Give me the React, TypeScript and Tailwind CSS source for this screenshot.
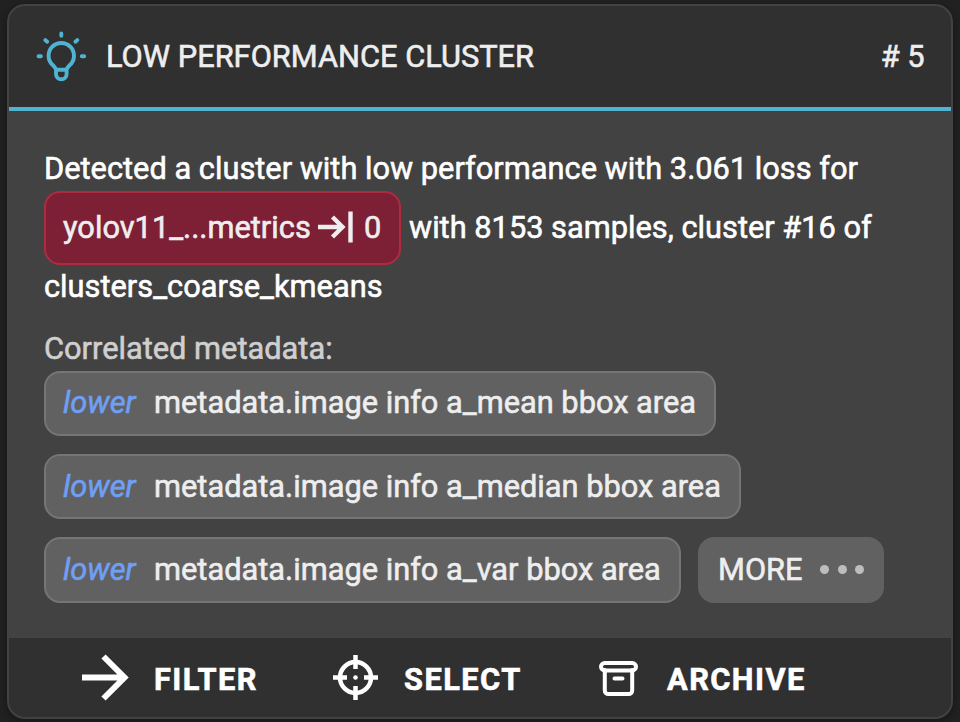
import React from "react";

const font = "font-['Roboto','Liberation_Sans',sans-serif]";

function Bulb() {
  return (
    <svg className="ml-[27px] h-[51px] w-[51px] shrink-0" viewBox="0 0 51 51" fill="none" stroke="#4fb3d1" strokeWidth="3.900" strokeLinecap="round" strokeLinejoin="round">
      <path d="M25.300 2.500v2.300M9.300 9.100l1.900 1.700M41.300 9.100l-1.900 1.700M2.500 25.300h2.400M45.800 25.300h2.400" />
      <path d="M20 38.700C19.500 36.500 18 35.500 17 34.300A12.700 12.700 0 1 1 33.600 34.300C32.600 35.500 31.100 36.500 30.600 38.700V43a5.300 5.300 0 0 1-10.600 0ZH30.600" />
    </svg>
  );
}

/* Slightly condensed run of text, anchored at its left edge. */
function T({ children, className = "" }: { children: React.ReactNode; className?: string }) {
  return <span className={`inline-block shrink-0 origin-left scale-x-[0.962] ${className}`}>{children}</span>;
}

function Chip({ name, size }: { name: string; size: string }) {
  return (
    <div className={`flex shrink-0 items-center overflow-hidden whitespace-pre rounded-2xl border-2 border-[#757575] bg-[#616161] pl-[17px] text-[#eeeeee] ${size}`}>
      <span className="w-[91px] shrink-0 italic text-[#6f9ff5]">
        <T>lower</T>
      </span>
      <T>{name}</T>
    </div>
  );
}

export default function App() {
  return (
    <div className={`h-[722px] w-[960px] bg-[#212121] pl-[7px] pt-1 text-[32px] leading-10 [-webkit-text-stroke:0.6px_currentColor] ${font}`}>
      <div className="flex h-[715px] w-[946px] flex-col overflow-hidden rounded-[18px] border-2 border-[#424242] bg-[#424242] shadow-[0_2px_8px_rgba(0,0,0,0.35)]">
        <header className="flex h-[105px] shrink-0 items-center border-b-4 border-[#4fb3d1] bg-[#303030] pb-px text-[#eeeeee]">
          <Bulb />
          <h1 className="ml-[19px] whitespace-pre">
            <T>LOW PERFORMANCE CLUSTER</T>
          </h1>
          <span className="ml-auto mr-[26px] inline-block origin-right scale-x-[0.962]"># 5</span>
        </header>
        <main className="h-[527px] shrink-0 whitespace-pre pl-[35px] pt-[37px] text-white">
          <p className="flex">
            <T>Detected a cluster with low performance with 3.061 loss for</T>
          </p>
          <div className="mt-[3px] flex h-[74px] items-center">
            <span className="mr-2 flex h-[74px] w-[357px] shrink-0 items-center rounded-2xl border-2 border-[#b02b40] bg-[#7d2036] pb-0.5 pl-[17px] text-[#eeeeee]">
              <span className="w-[255px] shrink-0">
                <T>yolov11_...metrics</T>
              </span>
              <svg className="h-8 w-[38px] shrink-0" viewBox="0 0 38 32" fill="none" stroke="#eeeeee" strokeWidth="4.400">
                <path d="M0 16h24M14.500 6L24.500 16 14.500 26M32.500 0.500v31" />
              </svg>
              <T className="ml-2">0</T>
            </span>
            <T className="pb-0.5">with 8153 samples, cluster #16 of</T>
          </div>
          <p className="mt-px flex">
            <T>clusters_coarse_kmeans</T>
          </p>
          <p className="mt-[22px] flex text-[#cfcfcf]">
            <T>Correlated metadata:</T>
          </p>
          <div className="mt-[3px] flex flex-col gap-[18px]">
            <Chip name="metadata.image info a_mean bbox area" size="h-[65px] w-[672px] pb-[3px]" />
            <Chip name="metadata.image info a_median bbox area" size="h-[65px] w-[697px] pb-px" />
            <div className="flex gap-[17px]">
              <Chip name="metadata.image info a_var bbox area" size="h-[66px] w-[637px] pb-0.5" />
              <button className="flex h-[66px] w-[186px] items-center rounded-2xl bg-[#616161] pb-0.5 pl-5 text-[#eeeeee]">
                <span className="w-[102px] text-left">
                  <T>MORE</T>
                </span>
                <span className="flex gap-[8.5px] pt-px">
                  <i className="size-[9px] rounded-full bg-[#bdbdbd]" />
                  <i className="size-[9px] rounded-full bg-[#bdbdbd]" />
                  <i className="size-[9px] rounded-full bg-[#bdbdbd]" />
                </span>
              </button>
            </div>
          </div>
        </main>
        <footer className="flex h-[79px] shrink-0 items-center bg-[#303030] font-bold tracking-[1.5px] text-white">
          <button className="ml-[73px] flex w-[251px] items-center">
            <svg className="h-[47px] w-[47px]" viewBox="0 0 47 47" fill="none" stroke="currentColor" strokeWidth="6">
              <path d="M0 23.500h42M21.500 2.500l21 21-21 21" />
            </svg>
            <T className="ml-[25px] pt-0.5">FILTER</T>
          </button>
          <button className="flex w-[266px] items-center">
            <svg className="h-[45px] w-[45px]" viewBox="0 0 45 45" fill="none" stroke="currentColor" strokeWidth="4.500">
              <circle cx="22.500" cy="22.500" r="15.500" />
              <path d="M22.500 0v14M22.500 31v14M0 22.500h14M31 22.500h14" />
              <circle cx="22.500" cy="22.500" r="2.300" fill="currentColor" stroke="none" />
            </svg>
            <T className="ml-[26px] pt-0.5">SELECT</T>
          </button>
          <button className="flex items-center">
            <svg className="h-9 w-[39px]" viewBox="0 0 39 36" fill="none" stroke="currentColor" strokeWidth="4">
              <rect x="2" y="3" width="35" height="7.500" rx="3.750" />
              <path d="M5.800 10v20.500a3.500 3.500 0 0 0 3.500 3.500h20.400a3.500 3.500 0 0 0 3.500-3.500V10M15.500 18.500h8" strokeLinecap="round" />
            </svg>
            <T className="ml-[29px] pt-0.5">ARCHIVE</T>
          </button>
        </footer>
      </div>
    </div>
  );
}
